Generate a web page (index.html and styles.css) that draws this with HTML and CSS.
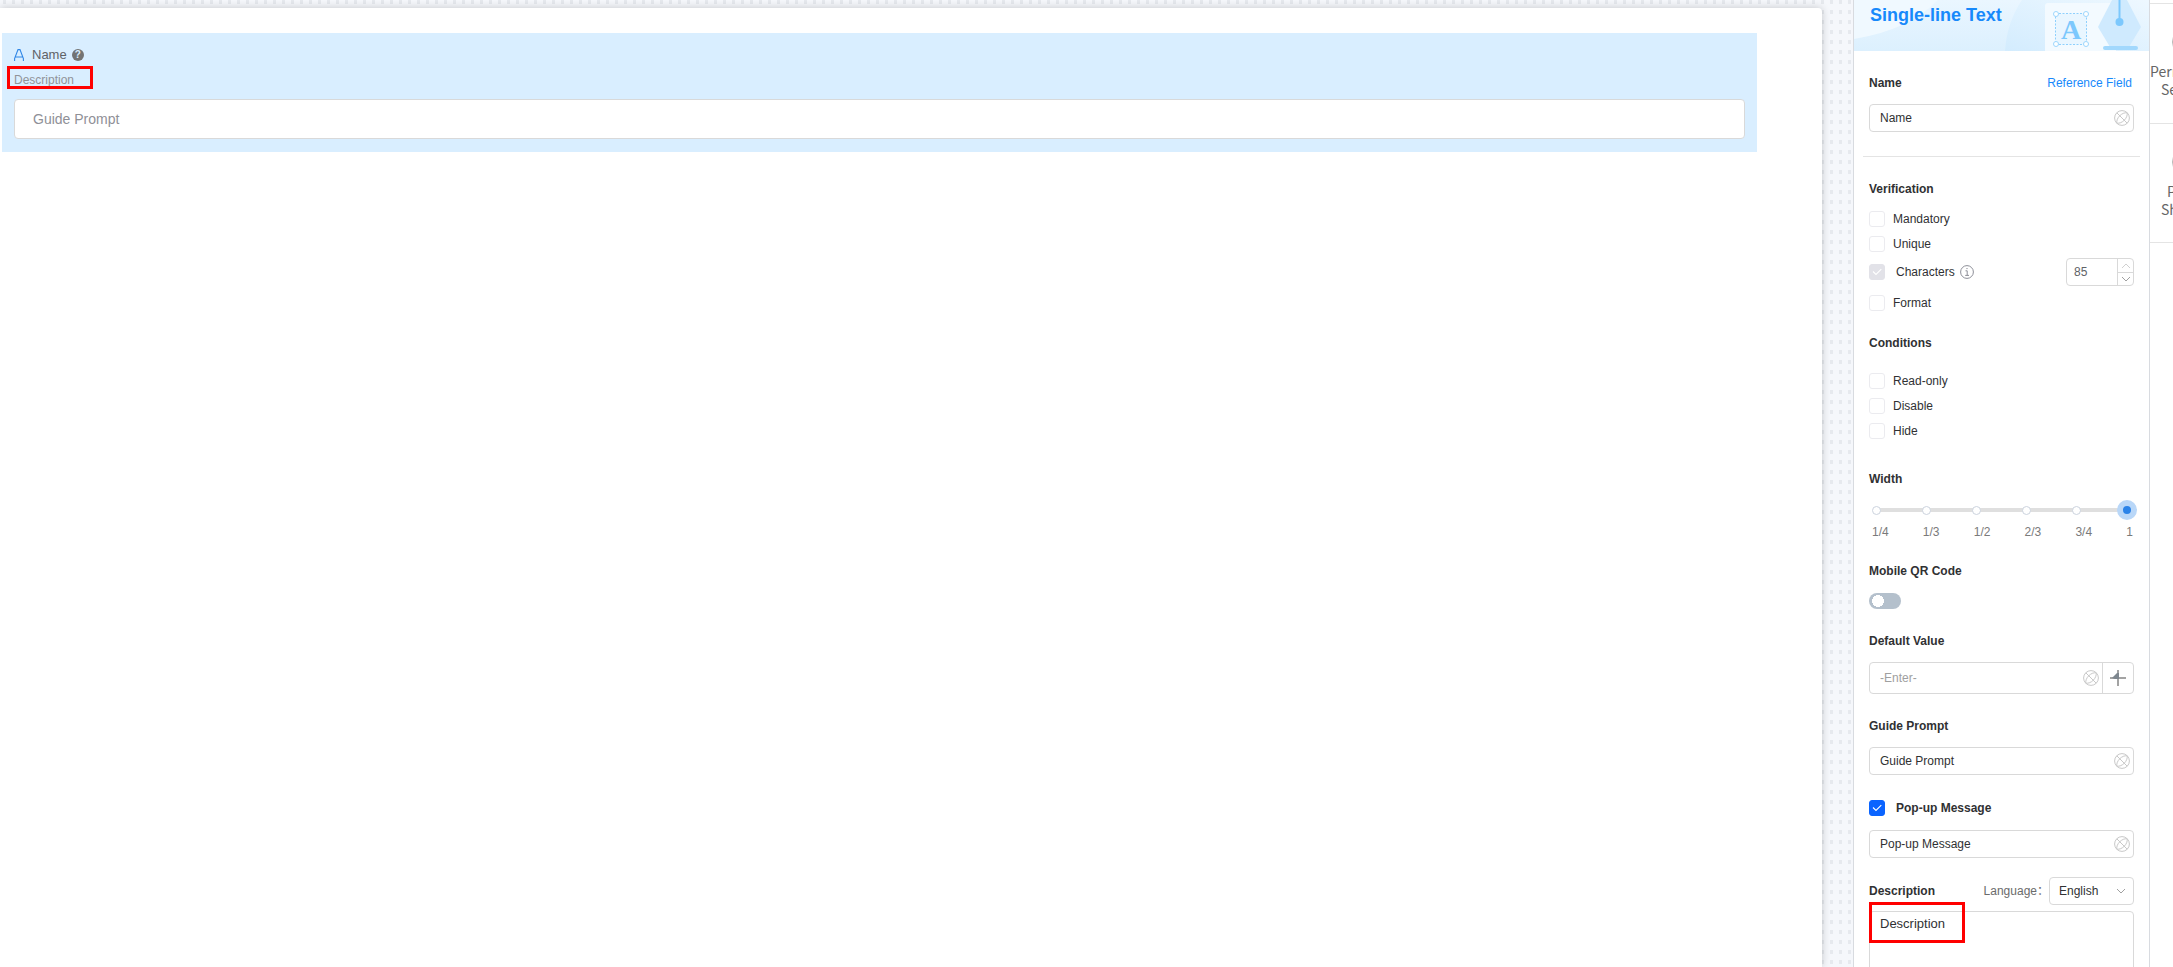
FILE: index.html
```
<!DOCTYPE html>
<html lang="en">
<head>
<meta charset="utf-8">
<title>Form designer</title>
<link rel="stylesheet" href="styles.css">
</head>
<body>
<svg class="defs" aria-hidden="true">
  <symbol id="globe" viewBox="0 0 16 16">
    <g fill="none" stroke="currentColor">
      <circle cx="8" cy="8" r="7.4"/>
      <path d="M2.800 13.200C2 8 8 2 13.200 2.800C14 8 8 14 2.800 13.200M2.800 2.800L13.200 13.200"/>
    </g>
  </symbol>
</svg>
<div class="app">
  <main class="canvas">
    <section class="sheet">
      <div class="field">
        <div class="field-head">
          <svg class="type-icon" viewBox="0 0 10 12"><path d="M.6 12V9.500L4 .6H6L9.400 9.500V12M1.600 8H8.400" fill="none" stroke="currentColor" stroke-width="1.100"/></svg>
          <label for="preview">Name</label>
          <span class="help">?</span>
        </div>
        <p class="field-desc"><span class="mark mark-preview"></span>Description</p>
        <input class="preview" id="preview" type="text" placeholder="Guide Prompt">
      </div>
    </section>
  </main>

  <aside class="panel">
    <header class="banner">
      <svg class="art" viewBox="0 0 295 51" aria-hidden="true">
        <defs>
          <linearGradient id="bg" x1="0" y1="0" x2="0" y2="1"><stop offset="0" stop-color="#eaf6ff"/><stop offset="1" stop-color="#dcf0fe"/></linearGradient>
          <linearGradient id="hill" x1="0" y1="1" x2="1" y2="0"><stop offset="0" stop-color="#d3ecfe"/><stop offset="1" stop-color="#eef8ff"/></linearGradient>
        </defs>
        <rect width="295" height="51" fill="url(#bg)"/>
        <path d="M0 0H84Q55 30 0 39Z" fill="#f0f9ff"/>
        <path d="M151 51Q153 22 168 0H295V51Z" fill="url(#hill)"/>
        <path d="M191 51V6Q191 3 194 3H262V51Z" fill="#f3faff"/>
        <path d="M258 0H273L287 27 275 47H256L244 27Z" fill="#cfeafe"/>
        <path d="M265.500 0V22" stroke="#7cc8fd" stroke-width="2"/>
        <circle cx="265.500" cy="22" r="4" fill="#7cc8fd"/>
        <rect x="249" y="46" width="35" height="4" rx="2" fill="#a2d8fd"/>
        <rect x="201.500" y="13.500" width="31" height="31" fill="#e9f6ff" stroke="#8ed0fd" stroke-dasharray="2 1.500"/>
        <g fill="#fff" stroke="#9dd6fd"><circle cx="202" cy="14" r="2.500"/><circle cx="232" cy="14" r="2.500"/><circle cx="202" cy="44" r="2.500"/><circle cx="232" cy="44" r="2.500"/></g>
        <text class="art-letter" x="217" y="39" text-anchor="middle">A</text>
      </svg>
      <h1>Single-line Text</h1>
    </header>

    <form class="props">
      <div class="group">
        <div class="row"><label class="title" for="name">Name</label><a href="#">Reference Field</a></div>
        <div class="box"><input id="name" type="text" value="Name"><svg class="globe"><use href="#globe"/></svg></div>
      </div>
      <hr>
      <fieldset class="checks">
        <legend class="title">Verification</legend>
        <label class="check"><input type="checkbox">Mandatory</label>
        <label class="check"><input type="checkbox">Unique</label>
        <div class="row chars">
          <label class="check wide"><input type="checkbox" checked disabled>Characters
            <svg class="info" viewBox="0 0 14 14"><g fill="none" stroke="currentColor"><circle cx="7" cy="7" r="6.400"/><path d="M5.500 5.800H7.200V10.300M5.200 10.400H9M6.400 3.600H7.600"/></g></svg>
          </label>
          <div class="spin">
            <input type="text" value="85" aria-label="Characters limit">
            <button type="button" aria-label="More"><svg viewBox="0 0 10 6"><path d="M1 5L5 1 9 5"/></svg></button>
            <button type="button" aria-label="Less"><svg class="dark" viewBox="0 0 10 6"><path d="M1 1L5 5 9 1"/></svg></button>
          </div>
        </div>
        <label class="check"><input type="checkbox">Format</label>
      </fieldset>
      <fieldset class="checks conditions">
        <legend class="title">Conditions</legend>
        <label class="check"><input type="checkbox">Read-only</label>
        <label class="check"><input type="checkbox">Disable</label>
        <label class="check"><input type="checkbox">Hide</label>
      </fieldset>
      <div class="group width">
        <label class="title" for="width">Width</label>
        <div class="slider">
          <div class="stops"><i></i><i></i><i></i><i></i><i></i><i></i></div>
          <input id="width" type="range" min="0" max="5" value="5">
        </div>
        <div class="ticks"><span>1/4</span><span>1/3</span><span>1/2</span><span>2/3</span><span>3/4</span><span>1</span></div>
      </div>
      <div class="group qr">
        <label class="title" for="qr">Mobile QR Code</label>
        <input class="switch" id="qr" type="checkbox">
      </div>
      <div class="group">
        <label class="title" for="default">Default Value</label>
        <div class="box tall">
          <input id="default" type="text" placeholder="-Enter-"><svg class="globe"><use href="#globe"/></svg>
          <button class="add" type="button" aria-label="Insert"><svg viewBox="0 0 16 16"><path d="M0 8H16M8 0V16" stroke="#a3a3a3" stroke-width="2"/><path d="M2 8L7 3H9V9H5Z" fill="#7d868e"/></svg></button>
        </div>
      </div>
      <div class="group">
        <label class="title" for="guide">Guide Prompt</label>
        <div class="box"><input id="guide" type="text" value="Guide Prompt"><svg class="globe"><use href="#globe"/></svg></div>
      </div>
      <div class="group popup">
        <label class="check wide title"><input type="checkbox" checked>Pop-up Message</label>
        <div class="box"><input type="text" value="Pop-up Message" aria-label="Pop-up Message"><svg class="globe"><use href="#globe"/></svg></div>
      </div>
      <div class="group desc">
        <div class="row">
          <label class="title" for="desc">Description</label>
          <div class="lang"><label for="lang">Language：</label>
            <div class="pick"><select id="lang"><option>English</option></select><svg viewBox="0 0 10 6"><path d="M1 1L5 5 9 1"/></svg></div>
          </div>
        </div>
        <div class="area"><textarea id="desc">Description</textarea><span class="mark mark-desc"></span></div>
      </div>
    </form>
  </aside>

  <nav class="rail">
    <div class="rail-item"><i></i><span>Perm</span><span class="in-2">Se</span></div>
    <div class="rail-item"><i></i><span class="in-3">P</span><span class="in-2">Sh</span></div>
  </nav>
</div>
</body>
</html>
```
FILE: styles.css
```
* { box-sizing: border-box; }
body {
  margin: 0;
  font: 12px/16px "Liberation Sans", Arial, "Noto Sans CJK SC", sans-serif;
  color: #303133;
  background: #fff;
}
.defs { display: none; }
h1, p, fieldset { margin: 0; padding: 0; border: 0; }
input, select, textarea, button { font: inherit; color: inherit; margin: 0; }
.app { display: flex; height: 100vh; overflow: hidden; }

/* Canvas */
.canvas {
  flex: 1;
  padding: 8px 31px 0 0;
  background: radial-gradient(#e6e9ee 2px, transparent 2px) 0 -3px / 9px 10px #f5f7fb;
}
.sheet {
  height: 100%;
  padding: 25px 65px 0 2px;
  background: #fff;
  border-radius: 0 4px 0 0;
  box-shadow: 0 0 8px rgba(0, 0, 0, .2);
}
.field { padding: 13px 12px; background: #d9eeff; }
.field-head {
  display: flex;
  align-items: center;
  height: 17px;
  font-size: 13px;
  line-height: 17px;
  color: #606266;
}
.type-icon { width: 10px; height: 12px; margin-right: 8px; color: #2f86e6; }
.help {
  width: 12px;
  height: 12px;
  margin-left: 5px;
  border-radius: 50%;
  background: #737373;
  color: #d9eeff;
  font: bold 10px/12px "Liberation Sans", Arial, sans-serif;
  text-align: center;
}
.field-desc { position: relative; margin: 9px 0 11px; color: #909399; }
.preview {
  display: block;
  width: 100%;
  height: 40px;
  padding: 0 18px;
  border: 1px solid #d9d9d9;
  border-radius: 4px;
  font-size: 14px;
}
.preview::placeholder { color: #8f9097; }
.mark { position: absolute; border: 3px solid #f00; pointer-events: none; }
.mark-preview { left: -7px; top: -6px; width: 86px; height: 23px; }
.mark-desc { left: 0; top: -9px; width: 96px; height: 41px; }

/* Properties panel */
.panel {
  width: 297px;
  flex: none;
  background: #fff;
  border: solid #d8dbe0;
  border-width: 0 1px;
}
.banner { position: relative; height: 51px; padding: 0 16px; background: #e6f4ff; }
.art { position: absolute; right: 0; top: 0; width: 295px; height: 51px; }
.art-letter { font: bold 28px "Liberation Serif", serif; fill: #7cc8fd; }
h1 { position: relative; font-size: 18px; line-height: 30px; color: #1789fb; }
.props { padding: 24px 15px 0; }
.title { font-weight: bold; display: block; }
.row { display: flex; align-items: center; justify-content: space-between; }
a { padding-right: 2px; color: #1789fb; text-decoration: none; }
.group + .group { margin-top: 24px; }
.group + .qr { margin-top: 23px; }
.group + .popup { margin-top: 25px; }
hr { margin: 24px -6px; border: 0; border-top: 1px solid #e4e4e4; }

.box {
  display: flex;
  align-items: center;
  height: 28px;
  margin-top: 13px;
  border: 1px solid #d9d9d9;
  border-radius: 4px;
}
.box.tall { height: 32px; }
.popup .box { margin-top: 14px; }
.box input { flex: 1; min-width: 0; border: 0; padding: 0 10px; background: none; outline: 0; }
.box input::placeholder { color: #a0a0a0; }
.globe { width: 16px; height: 16px; margin-right: 3px; color: #c8c8c8; }
.add {
  display: grid;
  place-items: center;
  width: 31px;
  height: 100%;
  padding: 0;
  border: 0;
  border-left: 1px solid #d9d9d9;
  background: none;
}
.add svg { width: 16px; height: 16px; }

.checks { display: grid; gap: 9px; }
.checks legend { padding: 0; margin-bottom: 14px; }
.conditions { margin-top: 24px; }
.conditions legend { margin-bottom: 22px; }
.check { display: flex; align-items: center; gap: 8px; height: 16px; line-height: 18px; }
.check.wide { gap: 11px; }
.check input {
  appearance: none;
  width: 16px;
  height: 16px;
  border: 1px solid #ebebef;
  border-radius: 3px;
  background: center / 10px 8px no-repeat #fff;
}
.check input:checked {
  border-color: #0a64ff;
  background-color: #0a64ff;
  background-image: url("data:image/svg+xml,%3Csvg xmlns='http://www.w3.org/2000/svg' viewBox='0 0 10 8'%3E%3Cpath d='M1 3.500L4 6.500 9.300 1.200' fill='none' stroke='white' stroke-width='1.100'/%3E%3C/svg%3E");
}
.check input:disabled { border-color: #e2e2e8; background-color: #e2e2e8; }
.info { width: 14px; height: 14px; margin-left: -6px; color: #8d8f98; }
.chars { margin: -3px 0 0; }
.spin {
  display: grid;
  grid-template: 1fr 1fr / 1fr 16px;
  width: 68px;
  height: 28px;
  border: 1px solid #d9d9d9;
  border-radius: 4px;
}
.spin input { grid-row: span 2; min-width: 0; border: 0; padding: 0 7px; background: none; color: #606266; }
.spin button {
  display: grid;
  place-items: center;
  padding: 0;
  border: 0;
  border-left: 1px solid #d9d9d9;
  background: none;
}
.spin button + button { border-top: 1px solid #d9d9d9; }
.spin svg, .pick svg { width: 10px; height: 6px; fill: none; stroke: #d0d0d0; }
.spin .dark, .pick svg { stroke: #a0a0a0; }

.width { margin-top: 32px; }
.slider { display: grid; margin: 13px -3px 4px; }
.slider > * { grid-area: 1 / 1; }
.stops {
  display: flex;
  justify-content: space-between;
  align-items: center;
  padding: 0 6px;
  background: linear-gradient(#dfdfdf, #dfdfdf) center / calc(100% - 20px) 4px no-repeat;
}
.stops i { width: 9px; height: 9px; border: 1px solid #ccd3de; border-radius: 50%; background: #fff; }
.slider input { appearance: none; width: 100%; height: 20px; background: none; }
.slider input::-webkit-slider-thumb {
  appearance: none;
  width: 20px;
  height: 20px;
  border: 6px solid #b9d7f8;
  border-radius: 50%;
  background: #2b83e8;
}
.ticks { display: flex; justify-content: space-between; padding: 0 1px 0 3px; color: #7a7a7a; }

.switch {
  appearance: none;
  display: block;
  width: 32px;
  height: 16px;
  margin-top: 14px;
  border-radius: 8px;
  background: radial-gradient(circle at 9px 8px, #fff 6px, transparent 6px) #b4c0cc;
}

.group + .desc { margin-top: 19px; }
.lang { display: flex; align-items: center; color: #6b6b6b; }
.pick { position: relative; width: 85px; color: #303133; }
.pick select {
  appearance: none;
  display: block;
  width: 100%;
  height: 28px;
  padding: 0 9px;
  border: 1px solid #d9d9d9;
  border-radius: 4px;
  background: none;
}
.pick svg { position: absolute; right: 8px; top: 11px; }
.area { position: relative; margin-top: 6px; }
textarea {
  display: block;
  width: 100%;
  height: 80px;
  padding: 4px 10px;
  border: 1px solid #d9d9d9;
  border-radius: 4px;
  font-size: 13px;
  resize: none;
}

/* Clipped tool rail */
.rail { width: 23px; flex: none; padding-top: 3px; overflow: hidden; background: #fff; }
.rail-item {
  display: flex;
  flex-direction: column;
  height: 120px;
  padding-top: 24px;
  border-top: 1px solid #e4e4e4;
  font: 14px/18px "Noto Sans CJK SC", sans-serif;
  color: #666;
}
.rail-item:last-child { border-bottom: 1px solid #e4e4e4; }
.rail-item i {
  flex: none;
  width: 28px;
  height: 28px;
  margin: 0 0 6px 22px;
  border: 1px solid #b5b5b5;
  border-radius: 50%;
}
.in-2 { padding-left: 11px; }
.in-3 { padding-left: 17px; }
```
